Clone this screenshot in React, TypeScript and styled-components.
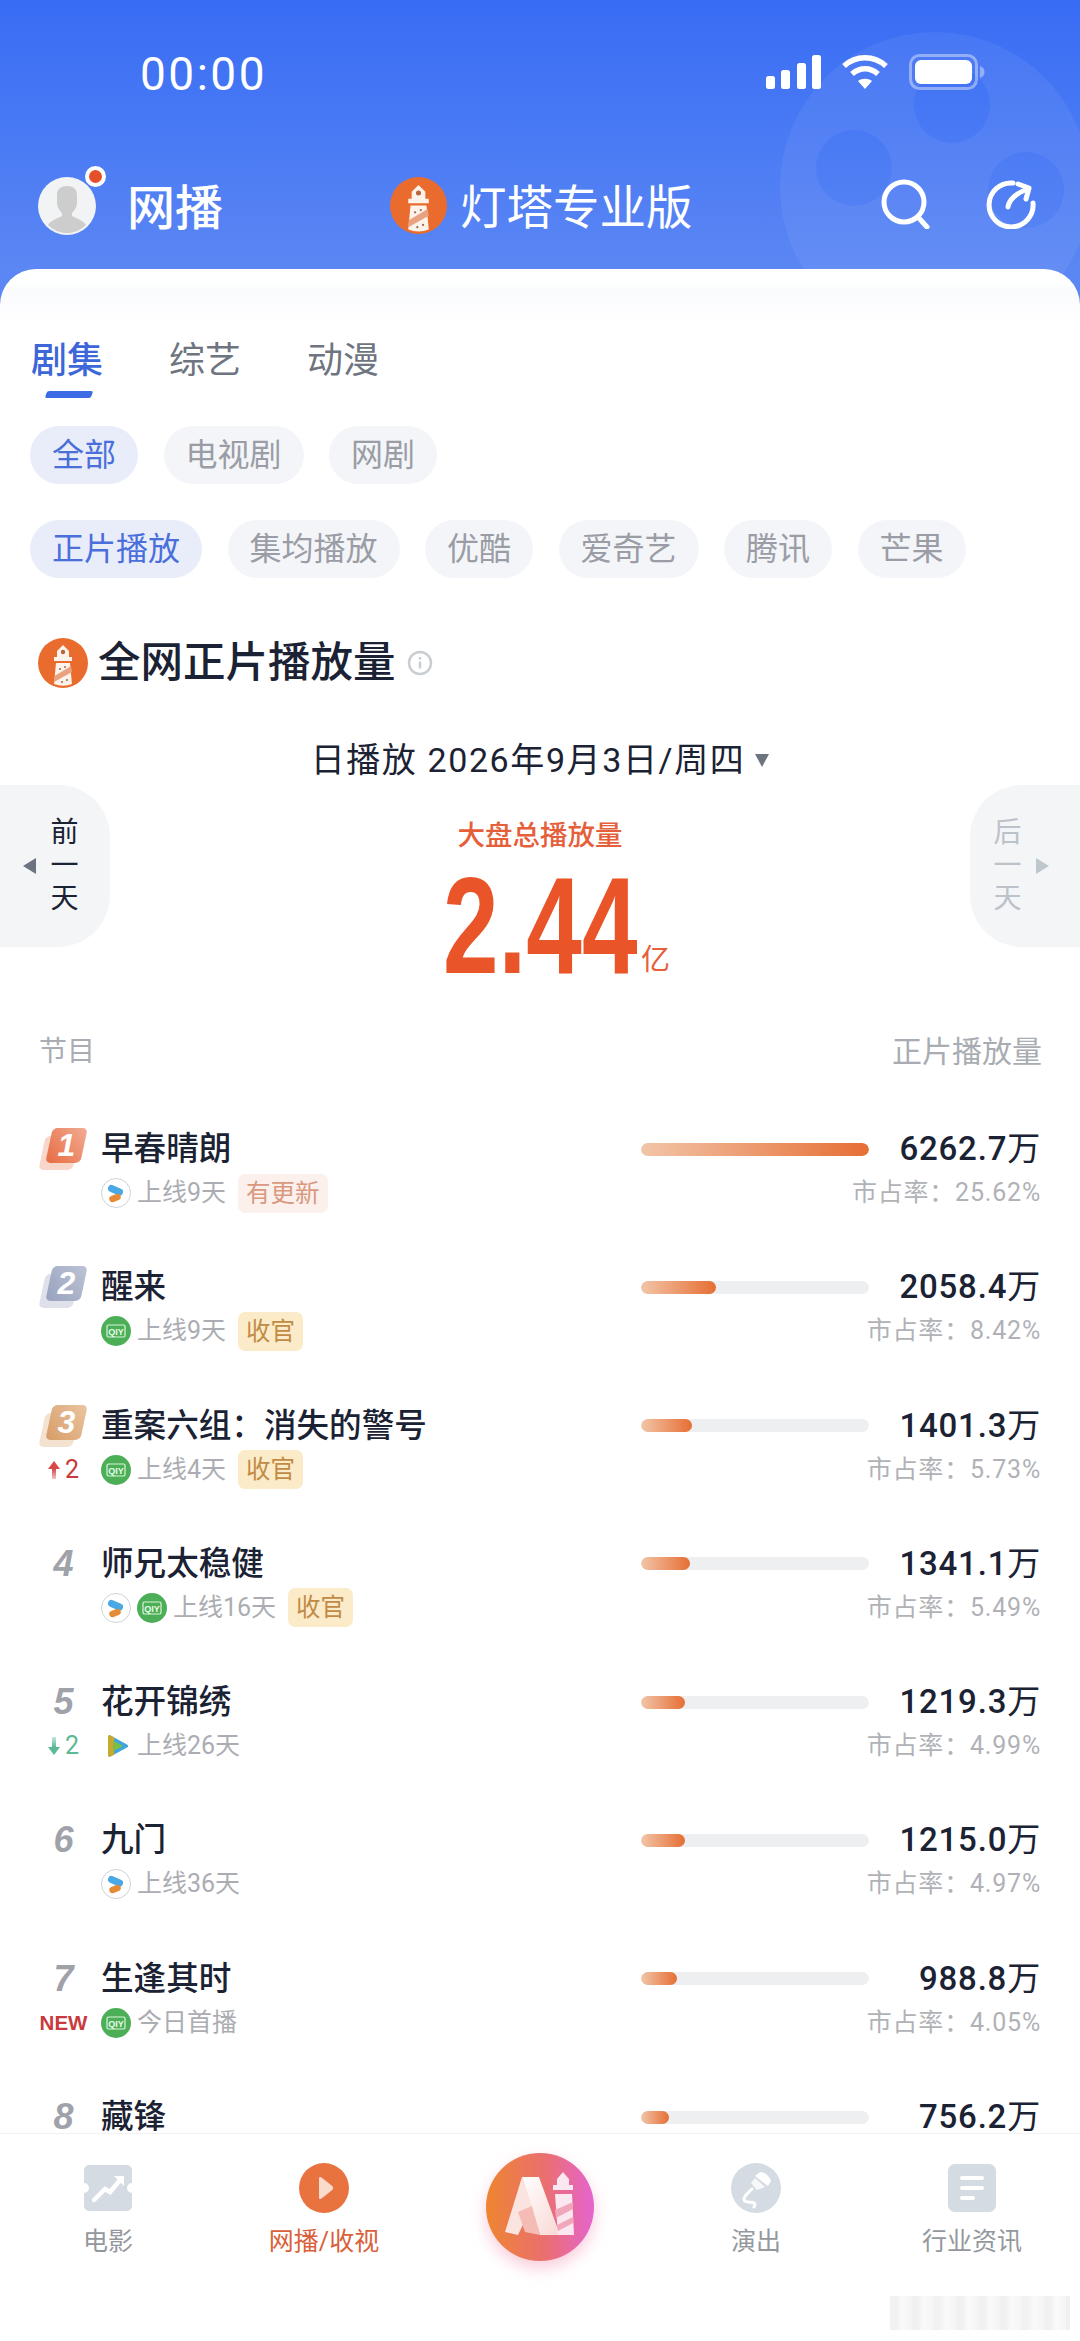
import React from 'react';
import styled, { createGlobalStyle } from 'styled-components';

const SANS = `Roboto, "Noto Sans CJK SC", sans-serif`;

const GlobalStyle = createGlobalStyle`
  html, body {
    margin: 0;
    padding: 0;
    background: #fff;
  }
  * {
    box-sizing: border-box;
  }
`;

interface Show {
  name: string;
  value: string;
  amount: number;
  share: string;
  sources?: Array<'youku' | 'iqiyi' | 'tencent'>;
  online?: string;
  tag?: { label: string; kind: 'update' | 'final' };
  delta?: 'up' | 'down' | 'new';
}

const SHOWS: Show[] = [
  { name: '早春晴朗', value: '6262.7', amount: 6262.7, share: '25.62%', sources: ['youku'], online: '上线9天', tag: { label: '有更新', kind: 'update' } },
  { name: '醒来', value: '2058.4', amount: 2058.4, share: '8.42%', sources: ['iqiyi'], online: '上线9天', tag: { label: '收官', kind: 'final' } },
  { name: '重案六组：消失的警号', value: '1401.3', amount: 1401.3, share: '5.73%', sources: ['iqiyi'], online: '上线4天', tag: { label: '收官', kind: 'final' }, delta: 'up' },
  { name: '师兄太稳健', value: '1341.1', amount: 1341.1, share: '5.49%', sources: ['youku', 'iqiyi'], online: '上线16天', tag: { label: '收官', kind: 'final' } },
  { name: '花开锦绣', value: '1219.3', amount: 1219.3, share: '4.99%', sources: ['tencent'], online: '上线26天', delta: 'down' },
  { name: '九门', value: '1215.0', amount: 1215.0, share: '4.97%', sources: ['youku'], online: '上线36天' },
  { name: '生逢其时', value: '988.8', amount: 988.8, share: '4.05%', sources: ['iqiyi'], online: '今日首播', delta: 'new' },
  { name: '藏锋', value: '756.2', amount: 756.2, share: '' },
];

const MAX_AMOUNT = SHOWS[0].amount;

const LighthouseLogo: React.FC<{ size: number }> = ({ size }) => (
  <svg width={size} height={size} viewBox="0 0 50 50">
    <circle cx="25" cy="25" r="25" fill="#E96C2E" />
    <path d="M25 7l6 6v6h3v4H16v-4h3v-6z" fill="#FDF3EA" />
    <circle cx="25" cy="14" r="2.2" fill="#B9653B" />
    <path d="M18 25h14l2 21a25 25 0 0 1-18 0z" fill="#FDF3EA" />
    <path d="M16.5 38L33 28l1 6-18 10z" fill="#E9A27F" />
    <circle cx="22" cy="31" r="1" fill="#9A6A50" />
    <circle cx="27" cy="29" r="1" fill="#9A6A50" />
    <circle cx="24" cy="44" r="1" fill="#9A6A50" />
    <circle cx="29" cy="42" r="1" fill="#9A6A50" />
  </svg>
);

const YoukuIcon = () => (
  <svg width="30" height="30" viewBox="0 0 30 30">
    <circle cx="15" cy="15" r="14.5" fill="#fff" stroke="#CFD3D6" strokeWidth="1" />
    <path d="M10.500 10.500l8 3.500" stroke="#4AA8E4" strokeWidth="7" strokeLinecap="round" />
    <path d="M11.500 21l5-2" stroke="#E58A35" strokeWidth="6.500" strokeLinecap="round" />
  </svg>
);

const IqiyiIcon = () => (
  <svg width="30" height="30" viewBox="0 0 30 30">
    <circle cx="15" cy="15" r="15" fill="#4CAF57" />
    <rect x="6" y="9" width="18" height="12" rx="1.5" fill="none" stroke="#D8F5DA" strokeWidth="1.2" />
    <text x="15" y="18.500" textAnchor="middle" fontSize="9" fontWeight="700" fontFamily="Liberation Sans, sans-serif" fill="#E8FBE9">QIY</text>
  </svg>
);

const TencentIcon = () => (
  <svg width="30" height="30" viewBox="0 0 30 30">
    <path d="M7 6c0-1.500 1.200-2 2.500-1.400L26 13.400c1.600.9 1.600 2.400 0 3.200L9.500 25.400C8.200 26 7 25.500 7 24z" fill="#3FA5DC" />
    <path d="M7 6c0-1.500 1.200-2 2.500-1.400l4 2.200c-1.200 5-1.200 11.400 0 16.400l-4 2.200C8.200 26 7 25.500 7 24z" fill="#C6A92F" />
    <path d="M12.500 10l9.500 5-9.500 5z" fill="#7BC043" />
  </svg>
);

const SOURCE_ICONS = { youku: YoukuIcon, iqiyi: IqiyiIcon, tencent: TencentIcon };

const ReelShape = () => (
  <svg width="310" height="310" viewBox="0 0 310 310">
    <path
      fillRule="evenodd"
      fill="#fff"
      fillOpacity="0.06"
      d="M155 0a155 155 0 1 1 0 310a155 155 0 1 1 0-310z
         M172 35a38 38 0 1 0 0 76a38 38 0 1 0 0-76z
         M74 98a38 38 0 1 0 0 76a38 38 0 1 0 0-76z
         M246 120a38 38 0 1 0 0 76a38 38 0 1 0 0-76z"
    />
  </svg>
);

const SignalIcon = () => (
  <svg width="56" height="34" viewBox="0 0 56 34" fill="#fff">
    <rect x="0" y="21" width="9" height="13" rx="2.500" />
    <rect x="15" y="15" width="9" height="19" rx="2.500" />
    <rect x="31" y="8" width="9" height="26" rx="2.500" />
    <rect x="46" y="0" width="9" height="34" rx="2.500" />
  </svg>
);

const WifiIcon = () => (
  <svg width="50" height="36" viewBox="0 0 48 36" fill="none" stroke="#fff" strokeWidth="5.500">
    <path d="M3 12C15 1 33 1 45 12" />
    <path d="M11 20c8-7 18-7 26 0" />
    <path d="M24 35l-7-8c4-3 10-3 14 0z" fill="#fff" stroke="none" />
  </svg>
);

const BatteryIcon = () => (
  <svg width="78" height="36" viewBox="0 0 76 36">
    <rect x="1.500" y="1.500" width="66" height="33" rx="9" fill="none" stroke="#fff" strokeOpacity="0.4" strokeWidth="3" />
    <rect x="6" y="6" width="57" height="24" rx="6" fill="#fff" />
    <path d="M71 12c3 1 4.500 3 4.500 6s-1.500 5-4.500 6z" fill="#fff" fillOpacity="0.4" />
  </svg>
);

const AvatarIcon = () => (
  <svg width="58" height="58" viewBox="0 0 58 58">
    <circle cx="29" cy="29" r="29" fill="#F2F3F4" />
    <path d="M19 18c0-6 4-9 10-9s10 3 10 9v8c0 4-3 8-5 10v3c5 3 11 4 14 9a26 26 0 0 1-38 0c3-5 9-6 14-9v-3c-2-2-5-6-5-10z" fill="#CDCDCD" />
  </svg>
);

const SearchIcon = () => (
  <svg width="50" height="50" viewBox="0 0 50 50" fill="none" stroke="#fff" strokeWidth="5" strokeLinecap="round">
    <circle cx="23" cy="23" r="20" />
    <path d="M37 38l9 10" />
  </svg>
);

const ShareIcon = () => (
  <svg width="50" height="50" viewBox="0 0 50 50" fill="none" stroke="#fff" strokeWidth="5" strokeLinecap="round" strokeLinejoin="round">
    <path d="M27 4A22 22 0 1 0 47 24" />
    <path d="M22 28c1-7 8-14 20-18" />
    <path d="M32 5l11 4-3 11" />
  </svg>
);

const InfoIcon = () => (
  <svg width="26" height="26" viewBox="0 0 26 26" fill="none" stroke="#C9CED3" strokeWidth="2.500">
    <circle cx="13" cy="13" r="11" />
    <path d="M13 11.500v7M13 7v2.500" />
  </svg>
);

const MovieNavIcon = () => (
  <svg width="48" height="46" viewBox="0 0 48 46">
    <path d="M5 0h38a5 5 0 0 1 5 5v13a5 5 0 0 0 0 10v13a5 5 0 0 1-5 5H5a5 5 0 0 1-5-5V28a5 5 0 0 0 0-10V5a5 5 0 0 1 5-5z" fill="#D5DBE3" />
    <path d="M10 35l11-11 5 3 11-13" fill="none" stroke="#fff" strokeWidth="4.500" strokeLinecap="round" />
    <path d="M30 11h10v10z" fill="#fff" />
  </svg>
);

const PlayNavIcon = () => (
  <svg width="50" height="50" viewBox="0 0 50 50">
    <circle cx="25" cy="25" r="25" fill="#E8733F" />
    <path d="M20 15.500c0-1.500 1-2 2.200-1.200l11 8.800c1.200 1 1.200 2.800 0 3.800l-11 8.800c-1.200.8-2.200.3-2.200-1.200z" fill="#F9DCCB" />
  </svg>
);

const MicNavIcon = () => (
  <svg width="50" height="50" viewBox="0 0 50 50">
    <circle cx="25" cy="25" r="25" fill="#D5DBE3" />
    <path d="M24 13l13 10 3-5c-1-4-6-9-11-9z" fill="#fff" />
    <path d="M24 15l10 9-8 3-6-7z" fill="#fff" fillOpacity="0.8" />
    <path d="M21 26c-4 4-8 7-8 10 0 5 8 2 10 4 2 1 0 4 0 4" fill="none" stroke="#fff" strokeWidth="3" strokeLinecap="round" />
  </svg>
);

const NewsNavIcon = () => (
  <svg width="48" height="48" viewBox="0 0 48 48">
    <rect width="48" height="48" rx="7" fill="#D5DBE3" />
    <path d="M14 14h20M14 24h20M14 34h11" stroke="#fff" strokeWidth="4" strokeLinecap="round" />
  </svg>
);

const AiLogo = () => (
  <svg width="108" height="110" viewBox="0 0 108 110">
    <defs>
      <linearGradient id="aiBack" x1="0" x2="1" y1="0" y2="0">
        <stop offset="0" stopColor="#EE8530" />
        <stop offset="0.55" stopColor="#EA6F70" />
        <stop offset="1" stopColor="#E564CF" />
      </linearGradient>
      <linearGradient id="aiLetter" x1="0" x2="1" y1="0" y2="1">
        <stop offset="0" stopColor="#FFFFFF" />
        <stop offset="1" stopColor="#F9D8D4" />
      </linearGradient>
    </defs>
    <circle cx="54" cy="55" r="54" fill="url(#aiBack)" />
    <path d="M36 25h17l21 58H54z" fill="url(#aiLetter)" />
    <path d="M36 25l10 29-14 29-13-3z" fill="#FBE3DF" />
    <path d="M32 60l14-6 8 29-15-3z" fill="#F4BCB4" />
    <path d="M77 20l6 7v6h4v5H67v-5h4v-6z" fill="#FBE7EF" />
    <path d="M69 42h17l2 41H72z" fill="#FBE7EF" />
    <path d="M69 58l18-8v7l-17 9zM71 73l16-8v6l-15 8z" fill="#F1A6BB" />
  </svg>
);

const RANK_TINTS: Record<number, [string, string]> = {
  1: ['#E76A3F', '#F2AD96'],
  2: ['#98A1BD', '#BDC4D6'],
  3: ['#D79C66', '#EAC5A2'],
};

export default function App() {
  return (
    <Phone>
      <GlobalStyle />
      <Reel>
        <ReelShape />
      </Reel>

      <StatusBar>
        <Clock>00:00</Clock>
        <StatusIcons>
          <SignalIcon />
          <WifiIcon />
          <BatteryIcon />
        </StatusIcons>
      </StatusBar>

      <TopBar>
        <TopLeft>
          <Avatar>
            <AvatarIcon />
            <AvatarDot />
          </Avatar>
          <PageName>网播</PageName>
        </TopLeft>
        <Brand>
          <LighthouseLogo size={57} />
          <BrandName>灯塔专业版</BrandName>
        </Brand>
        <TopActions>
          <SearchIcon />
          <ShareIcon />
        </TopActions>
      </TopBar>

      <Card>
        <Tabs>
          <Tab $active>
            剧集
            <TabMark />
          </Tab>
          <Tab>综艺</Tab>
          <Tab>动漫</Tab>
        </Tabs>

        <Pills $gap={25.5}>
          <Pill $active>全部</Pill>
          <Pill>电视剧</Pill>
          <Pill>网剧</Pill>
        </Pills>
        <Pills $gap={25.5}>
          <Pill $active>正片播放</Pill>
          <Pill>集均播放</Pill>
          <Pill>优酷</Pill>
          <Pill>爱奇艺</Pill>
          <Pill>腾讯</Pill>
          <Pill>芒果</Pill>
        </Pills>

        <SectionTitle>
          <LighthouseLogo size={50} />
          <SectionName>全网正片播放量</SectionName>
          <InfoIcon />
        </SectionTitle>

        <DateLine>
          日播放 2026年9月3日/周四
          <DateCaret />
        </DateLine>

        <Summary>
          <DayButton $side="left">
            <DayArrow $side="left" />
            <DayText>
              <span>前</span>
              <span>一</span>
              <span>天</span>
            </DayText>
          </DayButton>
          <Total>
            <TotalLabel>大盘总播放量</TotalLabel>
            <TotalValue>
              <TotalDigitsBox>
                <TotalDigits>2.44</TotalDigits>
              </TotalDigitsBox>
              <TotalUnit>亿</TotalUnit>
            </TotalValue>
          </Total>
          <DayButton $side="right" $disabled>
            <DayText>
              <span>后</span>
              <span>一</span>
              <span>天</span>
            </DayText>
            <DayArrow $side="right" />
          </DayButton>
        </Summary>

        <ListHead>
          <span>节目</span>
          <ListHeadRight>正片播放量</ListHeadRight>
        </ListHead>

        <List>
          {SHOWS.map((show, i) => {
            const rank = i + 1;
            const tints = RANK_TINTS[rank];
            return (
              <Row key={show.name}>
                <RankCell>
                  {tints ? (
                    <RankBadge>
                      <RankBack $color={tints[1]} />
                      <RankFront $from={tints[0]} $to={tints[1]} />
                      <RankBadgeNum>{rank}</RankBadgeNum>
                    </RankBadge>
                  ) : (
                    <RankNum>{rank}</RankNum>
                  )}
                </RankCell>
                <Name>{show.name}</Name>
                <Bar>
                  <BarFill style={{ width: `${(show.amount / MAX_AMOUNT) * 100}%` }} />
                </Bar>
                <Value>
                  {show.value}
                  <ValueUnit>万</ValueUnit>
                </Value>

                <DeltaCell>
                  {show.delta === 'up' && (
                    <Delta $color="#C93A3C">
                      <DeltaArrow $dir="up" />2
                    </Delta>
                  )}
                  {show.delta === 'down' && (
                    <Delta $color="#5DB894">
                      <DeltaArrow $dir="down" />2
                    </Delta>
                  )}
                  {show.delta === 'new' && <NewMark>NEW</NewMark>}
                </DeltaCell>
                <Meta>
                  {show.sources?.map(s => {
                    const Icon = SOURCE_ICONS[s];
                    return <Icon key={s} />;
                  })}
                  {show.online && <Online>{show.online}</Online>}
                  {show.tag && <Tag $kind={show.tag.kind}>{show.tag.label}</Tag>}
                </Meta>
                {show.share && <Share>市占率：{show.share}</Share>}
              </Row>
            );
          })}
        </List>
      </Card>

      <BottomNav>
        <NavItem>
          <NavIconBox>
            <MovieNavIcon />
          </NavIconBox>
          <NavLabel>电影</NavLabel>
        </NavItem>
        <NavItem>
          <NavIconBox>
            <PlayNavIcon />
          </NavIconBox>
          <NavLabel $active>网播/收视</NavLabel>
        </NavItem>
        <AiItem>
          <AiLogo />
        </AiItem>
        <NavItem>
          <NavIconBox>
            <MicNavIcon />
          </NavIconBox>
          <NavLabel>演出</NavLabel>
        </NavItem>
        <NavItem>
          <NavIconBox>
            <NewsNavIcon />
          </NavIconBox>
          <NavLabel>行业资讯</NavLabel>
        </NavItem>
      </BottomNav>
      <WatermarkSmudge />
    </Phone>
  );
}

const Phone = styled.div`
  position: relative;
  width: 1080px;
  height: 2341px;
  overflow: hidden;
  display: flex;
  flex-direction: column;
  font-family: ${SANS};
  background: linear-gradient(180deg, #386cf4 0, #5b87f4 270px, #5b87f4 100%);
`;

const Reel = styled.div`
  position: absolute;
  left: 780px;
  top: 32px;
  line-height: 0;
`;

const StatusBar = styled.div`
  position: relative;
  height: 178px;
  padding: 55px 94px 0 140px;
  display: flex;
  justify-content: space-between;
  align-items: flex-start;
`;

const Clock = styled.div`
  font: 400 46px/38px Roboto, sans-serif;
  color: #fff;
  letter-spacing: 2.500px;
`;

const StatusIcons = styled.div`
  display: flex;
  align-items: center;
  gap: 18px;
  margin-top: -1px;
`;

const TopBar = styled.div`
  position: relative;
  height: 91px;
  padding: 0 44px 0 38px;
  display: flex;
  align-items: flex-start;
`;

const TopLeft = styled.div`
  display: flex;
  align-items: center;
  gap: 31px;
  width: 352px;
  margin-top: -4px;
`;

const Avatar = styled.div`
  position: relative;
  width: 58px;
  height: 58px;
  line-height: 0;
`;

const AvatarDot = styled.div`
  position: absolute;
  right: -10px;
  top: -11px;
  width: 21px;
  height: 21px;
  border-radius: 50%;
  background: #e5502a;
  border: 4px solid #fff;
`;

const PageName = styled.div`
  font-size: 48px;
  line-height: 58px;
  font-weight: 500;
  color: #fff;
  padding-top: 6px;
`;

const Brand = styled.div`
  display: flex;
  align-items: center;
  gap: 13px;
  margin-top: -4px;
`;

const BrandName = styled.div`
  font-size: 46.500px;
  line-height: 57px;
  font-weight: 400;
  color: #fff;
  padding-top: 6px;
`;

const TopActions = styled.div`
  margin-left: auto;
  display: flex;
  gap: 55px;
  padding-top: 1px;
`;

const Card = styled.div`
  position: relative;
  flex: 1;
  min-height: 0;
  padding-top: 67px;
  border-radius: 36px 36px 0 0;
  background: linear-gradient(180deg, #fff 0, #fff 12px, #fafbfd 20px, #fff 60px);
`;

const Tabs = styled.div`
  display: flex;
  gap: 66px;
  padding-left: 31px;
  margin-bottom: 40px;
`;

const Tab = styled.div<{ $active?: boolean }>`
  position: relative;
  font-size: 36px;
  line-height: 50px;
  color: ${p => (p.$active ? '#3d66d9' : '#6e7480')};
  font-weight: ${p => (p.$active ? 500 : 400)};
`;

const TabMark = styled.div`
  position: absolute;
  left: 15px;
  bottom: -12px;
  width: 46px;
  height: 7px;
  border-radius: 2px;
  background: #3d6be6;
  transform: skewX(-20deg);
`;

const Pills = styled.div<{ $gap: number }>`
  display: flex;
  gap: ${p => p.$gap}px;
  padding-left: 30px;
  margin-bottom: 36px;
`;

const Pill = styled.div<{ $active?: boolean }>`
  height: 58px;
  padding: 0 22px;
  border-radius: 29px;
  font-size: 32px;
  line-height: 58px;
  color: ${p => (p.$active ? '#4a6fdb' : '#9a9da5')};
  background: ${p => (p.$active ? '#e8edf9' : '#f4f5f8')};
`;

const SectionTitle = styled.div`
  display: flex;
  align-items: center;
  padding-left: 38px;
  margin-top: 60px;
  height: 50px;
`;

const SectionName = styled.div`
  margin: 0 11px 0 10px;
  font-size: 42.500px;
  line-height: 50px;
  font-weight: 500;
  color: #1b2233;
`;

const DateLine = styled.div`
  margin-top: 52px;
  height: 40px;
  display: flex;
  align-items: center;
  justify-content: center;
  font-size: 34px;
  line-height: 40px;
  font-weight: 400;
  letter-spacing: 1.600px;
  color: #1b2233;
  white-space: pre;
`;

const DateCaret = styled.span`
  margin-left: 10px;
  width: 0;
  height: 0;
  border-left: 7px solid transparent;
  border-right: 7px solid transparent;
  border-top: 13px solid #6d7480;
`;

const Summary = styled.div`
  margin-top: 5px;
  height: 162px;
  display: flex;
  justify-content: space-between;
`;

const DayButton = styled.div<{ $side: 'left' | 'right'; $disabled?: boolean }>`
  width: 110px;
  height: 162px;
  display: flex;
  align-items: center;
  gap: 14px;
  justify-content: center;
  padding: 0 30px 0 22px;
  background: #f4f5f7;
  border-radius: ${p => (p.$side === 'left' ? '0 52px 52px 0' : '52px 0 0 52px')};
  color: ${p => (p.$disabled ? '#bcc2c9' : '#1b2233')};
`;

const DayArrow = styled.div<{ $side: 'left' | 'right' }>`
  flex: none;
  width: 0;
  height: 0;
  border-top: 8px solid transparent;
  border-bottom: 8px solid transparent;
  ${p =>
    p.$side === 'left'
      ? 'border-right: 13px solid #6d7480;'
      : 'border-left: 13px solid #bcc8cc;'}
`;

const DayText = styled.div`
  display: flex;
  flex-direction: column;
  gap: 5px;
  font-size: 28px;
  line-height: 28px;
`;

const Total = styled.div`
  flex: 1;
  display: flex;
  flex-direction: column;
  align-items: center;
  padding-top: 37px;
`;

const TotalLabel = styled.div`
  font-size: 27.500px;
  line-height: 28px;
  color: #e5603a;
  font-weight: 500;
`;

const TotalValue = styled.div`
  margin-top: 26px;
  padding-left: 33px;
  display: flex;
  align-items: flex-end;
  gap: 4px;
`;

const TotalDigitsBox = styled.div`
  width: 194px;
  height: 99px;
`;

const TotalDigits = styled.div`
  display: inline-block;
  font: 700 138px/99px 'Liberation Sans', sans-serif;
  color: #e95428;
  transform: scaleX(0.724);
  transform-origin: left center;
`;

const TotalUnit = styled.div`
  font-size: 29px;
  line-height: 30px;
  color: #e5603a;
`;

const ListHead = styled.div`
  margin-top: 90px;
  padding: 0 38px 0 39px;
  display: flex;
  justify-content: space-between;
  font-size: 28px;
  line-height: 30px;
  color: #a9adb3;
`;

const ListHeadRight = styled.span`
  font-size: 30px;
`;

const List = styled.div`
  margin-top: 60px;
`;

const Row = styled.div`
  height: 138.300px;
  padding: 0 39px;
  display: grid;
  grid-template-columns: 62px 1fr 228px 172px;
  grid-template-rows: 44px 44px;
  align-items: center;
`;

const RankCell = styled.div`
  display: flex;
  justify-content: center;
  padding-right: 13px;
`;

const RankBadge = styled.div`
  position: relative;
  width: 49px;
  height: 44px;
`;

const RankBack = styled.div<{ $color: string }>`
  position: absolute;
  left: 3px;
  top: 9px;
  width: 34px;
  height: 34px;
  border-radius: 5px;
  background: ${p => p.$color};
  opacity: 0.5;
  transform: skewX(-12deg);
`;

const RankFront = styled.div<{ $from: string; $to: string }>`
  position: absolute;
  left: 10px;
  top: 1px;
  width: 35px;
  height: 35px;
  border-radius: 5px;
  background: linear-gradient(45deg, ${p => p.$from}, ${p => p.$to});
  transform: skewX(-12deg);
`;

const RankBadgeNum = styled.div`
  position: absolute;
  left: 10px;
  top: 1px;
  width: 35px;
  text-align: center;
  font: italic 700 32px/35px 'Liberation Sans', sans-serif;
  color: #fff;
`;

const RankNum = styled.div`
  font: italic 700 36px/32px 'Liberation Sans', sans-serif;
  color: #a0a2aa;
`;

const Name = styled.div`
  font-size: 32.600px;
  line-height: 32px;
  font-weight: 500;
  color: #1b2233;
  white-space: nowrap;
`;

const Bar = styled.div`
  height: 13px;
  border-radius: 7px;
  background: #eeeff1;
  overflow: hidden;
`;

const BarFill = styled.div`
  height: 100%;
  border-radius: 7px;
  background: linear-gradient(90deg, #f2c5a8, #e66e34);
`;

const Value = styled.div`
  text-align: right;
  font-size: 33px;
  line-height: 32px;
  font-weight: 500;
  letter-spacing: 0.8px;
  color: #1b2233;
`;

const ValueUnit = styled.span`
  font-weight: 400;
`;

const DeltaCell = styled.div`
  display: flex;
  justify-content: center;
  padding-right: 13px;
`;

const Delta = styled.div<{ $color: string }>`
  display: flex;
  align-items: center;
  gap: 5px;
  font-size: 25px;
  line-height: 28px;
  color: ${p => p.$color};
`;

const DeltaArrow = styled.span<{ $dir: 'up' | 'down' }>`
  position: relative;
  width: 12px;
  height: 18px;
  &::before {
    content: '';
    position: absolute;
    left: 0;
    ${p => (p.$dir === 'up' ? 'top: 0;' : 'bottom: 0;')}
    border-left: 6px solid transparent;
    border-right: 6px solid transparent;
    ${p => (p.$dir === 'up' ? 'border-bottom: 8px solid #d84a4a;' : 'border-top: 8px solid #5db894;')}
  }
  &::after {
    content: '';
    position: absolute;
    left: 4px;
    width: 4px;
    ${p =>
      p.$dir === 'up'
        ? 'top: 8px; height: 10px; background: linear-gradient(#d84a4a, #f3c4c4);'
        : 'bottom: 8px; height: 10px; background: linear-gradient(#c4eadb, #5db894);'}
  }
`;

const NewMark = styled.div`
  font: 700 20.500px/28px 'Liberation Sans', sans-serif;
  color: #c93a3c;
`;

const Meta = styled.div`
  display: flex;
  align-items: center;
  gap: 6px;
  line-height: 0;
`;

const Online = styled.span`
  font-size: 25px;
  line-height: 30px;
  color: #abadb2;
`;

const Tag = styled.span<{ $kind: 'update' | 'final' }>`
  margin-left: 6px;
  height: 39px;
  padding: 0 8px;
  border-radius: 7px;
  font-size: 24.500px;
  line-height: 39px;
  color: ${p => (p.$kind === 'update' ? '#d9997f' : '#c28b45')};
  background: ${p => (p.$kind === 'update' ? '#fbf0ec' : '#fbebc8')};
`;

const Share = styled.div`
  grid-column: 3 / 5;
  text-align: right;
  font-size: 25px;
  line-height: 30px;
  letter-spacing: 0.8px;
  color: #b0b2b7;
`;

const BottomNav = styled.div`
  position: relative;
  flex: none;
  height: 208px;
  padding-top: 18px;
  display: grid;
  grid-template-columns: repeat(5, 1fr);
  align-items: start;
  background: #fff;
  border-top: 1px solid #f1f2f4;
`;

const NavItem = styled.div`
  display: flex;
  flex-direction: column;
  align-items: center;
  padding-top: 11px;
`;

const NavIconBox = styled.div`
  height: 50px;
  line-height: 0;
  display: flex;
  align-items: center;
`;

const NavLabel = styled.div<{ $active?: boolean }>`
  margin-top: 14px;
  font-size: 25px;
  line-height: 30px;
  white-space: nowrap;
  color: ${p => (p.$active ? '#d9603a' : '#94989d')};
`;

const AiItem = styled.div`
  display: flex;
  justify-content: center;
  line-height: 0;
  filter: drop-shadow(0 7px 8px rgba(240, 110, 150, 0.35));
`;

const WatermarkSmudge = styled.div`
  position: absolute;
  right: 10px;
  bottom: 11px;
  width: 180px;
  height: 34px;
  background: repeating-linear-gradient(90deg, #f1f1f1 0, #f1f1f1 6px, #fafafa 12px, #f4f4f4 22px);
`;
